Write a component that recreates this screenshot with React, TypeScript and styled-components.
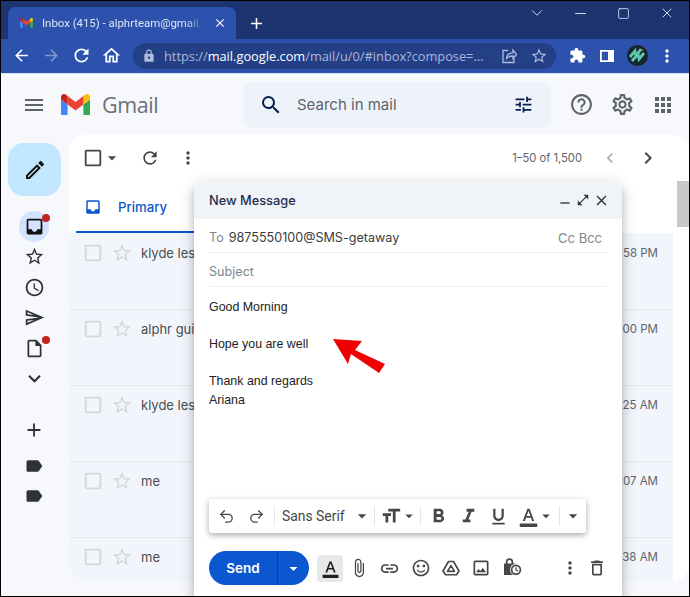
import React from 'react';
import styled, { createGlobalStyle } from 'styled-components';
import { ChevronDown, Minus, Redo2, Square, Undo2, X } from 'lucide-react';
import {
  MdAccessTime, MdAdd, MdApps, MdArrowBack, MdArrowDropDown, MdArrowForward, MdAttachFile,
  MdCheckBoxOutlineBlank, MdChevronLeft, MdChevronRight, MdClose, MdExpandMore, MdExtension,
  MdFormatBold, MdFormatColorText, MdFormatItalic, MdFormatSize, MdFormatUnderlined, MdHelpOutline,
  MdInbox, MdLabel, MdLink, MdLock, MdMenu, MdMoreVert, MdOpenInFull, MdOutlineCreate,
  MdOutlineDelete, MdOutlineHome, MdOutlineInsertDriveFile, MdOutlineInsertPhoto,
  MdOutlineSend, MdOutlineSettings, MdRefresh, MdRemove, MdSearch, MdSentimentSatisfiedAlt,
  MdStarBorder, MdTune,
} from 'react-icons/md';

const GlobalStyle = createGlobalStyle`
  html, body { margin: 0; padding: 0; background: #000; }
  * { box-sizing: border-box; }
`;

const Screen = styled.div`
  position: relative;
  width: 690px;
  height: 597px;
  border: 1px solid #000;
  overflow: hidden;
  display: flex;
  flex-direction: column;
  background: #f6f8fc;
  font-family: Roboto, 'Liberation Sans', sans-serif;
`;

/* browser chrome */
const TabStrip = styled.div`
  height: 38px;
  flex: none;
  background: #1d3471;
  display: flex;
  align-items: flex-end;
  padding-left: 7px;
  color: #fff;
`;

const Tab = styled.div`
  width: 228px;
  height: 32px;
  background: #2c52ad;
  border-radius: 8px 8px 0 0;
  display: flex;
  align-items: center;
  padding: 0 9px 0 12px;
  gap: 9px;
`;

const TabTitle = styled.span`
  flex: 1;
  min-width: 0;
  font-family: Roboto, 'Liberation Sans', sans-serif;
  font-size: 11.4px;
  color: #dfe6f5;
  white-space: nowrap;
  overflow: hidden;
  mask-image: linear-gradient(to right, #000 88%, transparent);
`;

const NewTab = styled.div`
  width: 40px;
  height: 32px;
  display: flex;
  align-items: center;
  justify-content: center;
`;

const WindowControls = styled.div`
  margin-left: auto;
  align-self: flex-start;
  height: 24px;
  display: flex;
  align-items: center;
  color: #dfe6f5;
`;

const ControlSlot = styled.div`
  width: 43.5px;
  display: flex;
  justify-content: center;
`;

const BrowserBar = styled.div`
  height: 35px;
  flex: none;
  background: #2c52ad;
  border-bottom: 1px solid #d8e0ef;
  display: flex;
  align-items: center;
  color: #fff;
  padding-bottom: 1px;
`;

const NavButton = styled.div<{ $w?: number; $dim?: boolean }>`
  width: ${({ $w }) => $w ?? 30}px;
  flex: none;
  display: flex;
  align-items: center;
  justify-content: center;
  color: ${({ $dim }) => ($dim ? '#8298cf' : '#fff')};
`;

const NavGroup = styled.div`
  width: 132px;
  flex: none;
  display: flex;
  padding-left: 5px;
`;

const Omnibox = styled.div`
  width: 423px;
  height: 26px;
  flex: none;
  border-radius: 13px;
  background: #233f86;
  display: flex;
  align-items: center;
  padding: 0 8px 0 9px;
  color: #aebce0;
`;

const Url = styled.span`
  margin-left: 8px;
  font-family: 'Open Sans', 'Liberation Sans', sans-serif;
  font-size: 12.8px;
  color: #aab8dc;
  white-space: nowrap;
  flex: 1;

  b {
    font-weight: 400;
    color: #fff;
  }
`;

const OmniActions = styled.div`
  display: flex;
  align-items: center;
  gap: 12px;
`;

const BrowserActions = styled.div`
  display: flex;
  align-items: center;
  margin-left: 6px;
`;

/* gmail header */
const Header = styled.header`
  height: 61px;
  flex: none;
  display: flex;
  align-items: center;
  color: #5f6368;
  background: #f6f8fc;
`;

const MenuSlot = styled.div`
  width: 60px;
  padding-left: 21px;
  display: flex;
`;

const Brand = styled.div`
  width: 183px;
  display: flex;
  align-items: center;
  gap: 12px;
  font-family: 'Open Sans', Roboto, sans-serif;
  font-size: 21.5px;
  color: #6b6f73;
  letter-spacing: -0.4px;
`;

const SearchBox = styled.div`
  width: 307px;
  height: 46px;
  border-radius: 8px;
  background: #eef3fb;
  display: flex;
  align-items: center;
  padding: 0 17px 0 15px;
  color: #041e49;
`;

const SearchText = styled.span`
  flex: 1;
  margin-left: 14px;
  font-family: Inter, Roboto, sans-serif;
  font-size: 15px;
  color: #5f6368;
`;

const HeaderActions = styled.div`
  display: flex;
  align-items: center;
  margin-left: 18px;
  gap: 16px;
  color: #5f6368;
`;

/* page body */
const Body = styled.div`
  flex: 1;
  min-height: 0;
  display: flex;
  align-items: flex-start;
`;

const Rail = styled.nav`
  width: 68px;
  flex: none;
  display: flex;
  flex-direction: column;
  align-items: center;
  padding-top: 8px;
  color: #303336;
`;

const ComposeFab = styled.div`
  width: 53px;
  height: 53px;
  border-radius: 16px;
  background: #c2e7ff;
  display: flex;
  align-items: center;
  justify-content: center;
  margin: 0 1px 15px 0;
  color: #111;
`;

const RailItem = styled.div<{ $active?: boolean; $gap?: number }>`
  position: relative;
  width: 30px;
  height: 30.5px;
  margin: ${({ $gap }) => $gap ?? 0}px 2px 0 0;
  display: flex;
  align-items: center;
  justify-content: center;
  border-radius: 50%;
  background: ${({ $active }) => ($active ? '#d3e3fd' : 'transparent')};
  color: ${({ $active }) => ($active ? '#111' : 'inherit')};
`;

const Dot = styled.span`
  position: absolute;
  top: 3px;
  right: -1px;
  width: 8px;
  height: 8px;
  border-radius: 50%;
  background: #c5221f;
`;

const Panel = styled.main`
  position: relative;
  flex: 1;
  height: 446px;
  background: #fff;
  border-radius: 16px;
  overflow: hidden;
`;

const ListToolbar = styled.div`
  height: 46px;
  display: flex;
  align-items: center;
  padding: 0 22px 0 14px;
  color: #444746;
`;

const ToolSlot = styled.div<{ $w: number; $dim?: boolean }>`
  width: ${({ $w }) => $w}px;
  flex: none;
  display: flex;
  align-items: center;
  justify-content: center;
  color: ${({ $dim }) => ($dim ? '#a9adb2' : 'inherit')};

  svg {
    flex: none;
  }
`;

const PageCount = styled.span`
  margin-left: auto;
  margin-right: 9px;
  font-family: Inter, Roboto, sans-serif;
  font-size: 11.2px;
  color: #5f6368;
`;

const TabsRow = styled.div`
  height: 52px;
  padding-left: 7px;
  display: flex;
`;

const PrimaryTab = styled.div`
  width: 300px;
  height: 52px;
  border-bottom: 2px solid #0b57d0;
  display: flex;
  align-items: center;
  gap: 16px;
  padding: 2px 0 0 8px;
  color: #0b57d0;
  font-family: Inter, Roboto, sans-serif;
  font-size: 13.2px;
  font-weight: 500;
`;

const Rows = styled.div`
  width: 604px;
  height: 348px;
  background: #f2f6fc;
  border-radius: 0 0 0 16px;
`;

const Row = styled.div<{ $short?: boolean }>`
  height: ${({ $short }) => ($short ? 44 : 76)}px;
  border-top: 1px solid #e3e6ea;
  display: flex;
  align-items: flex-start;
  padding: 8px 15px 0 13px;
  color: #d4d7da;
  gap: 7px;

  &:first-child {
    border-top: none;
    padding-top: 9px;
  }
`;

const Sender = styled.span`
  margin-left: 1px;
  width: 120px;
  line-height: 22px;
  font-family: Inter, Roboto, sans-serif;
  font-size: 13px;
  color: #4a4d50;
  white-space: nowrap;
`;

const Time = styled.span`
  margin-left: auto;
  line-height: 22px;
  font-family: Inter, Roboto, sans-serif;
  font-size: 11.5px;
  color: #5f6368;
`;

const ScrollThumb = styled.div`
  position: absolute;
  right: 0;
  top: 46px;
  width: 12px;
  height: 46px;
  background: #c8c8c8;
`;

/* compose window */
const Compose = styled.section`
  position: absolute;
  left: 193px;
  top: 180px;
  bottom: -10px;
  width: 428px;
  background: #fff;
  border-radius: 8px 8px 0 0;
  box-shadow: 0 8px 10px 1px rgba(0, 0, 0, 0.14), 0 3px 14px 2px rgba(0, 0, 0, 0.12), 0 5px 5px -3px rgba(0, 0, 0, 0.2);
  display: flex;
  flex-direction: column;
`;

const ComposeHead = styled.div`
  height: 38px;
  flex: none;
  background: #f0f4f9;
  border-radius: 8px 8px 0 0;
  display: flex;
  align-items: center;
  padding: 0 12px 0 15px;
  font-family: Inter, Roboto, sans-serif;
  font-size: 12.8px;
  font-weight: 500;
  color: #1f2f4d;
`;

const HeadControls = styled.div`
  margin-left: auto;
  display: flex;
  align-items: center;
  gap: 3px;
  color: #2f3437;
`;

const Field = styled.div<{ $h: number }>`
  height: ${({ $h }) => $h}px;
  flex: none;
  margin: 0 16px 0 15px;
  padding-top: 4px;
  border-bottom: 1px solid #eceef0;
  display: flex;
  align-items: center;
  gap: 5px;
  font-family: Inter, Roboto, sans-serif;
  font-size: 12.6px;
  color: #3a3d40;
`;

const Muted = styled.span`
  color: #80868b;
`;

const CcBcc = styled.span`
  margin-left: auto;
  margin-right: 4px;
  font-size: 13px;
  color: #80868b;
`;

const Message = styled.div`
  flex: 1;
  min-height: 0;
  padding: 11px 15px 0;
  font-family: 'Liberation Sans', Arial, sans-serif;
  font-size: 12.4px;
  line-height: 18.6px;
  color: #222;
`;

const FormatBar = styled.div`
  width: 377px;
  height: 34px;
  flex: none;
  margin-left: 15px;
  background: #fff;
  border-radius: 3px;
  box-shadow: 0 2px 6px rgba(0, 0, 0, 0.35);
  display: flex;
  align-items: center;
  padding-left: 2px;
  color: #444746;
`;

const Divider = styled.span<{ $before?: number }>`
  width: 1px;
  height: 20px;
  flex: none;
  margin-left: ${({ $before }) => $before ?? 0}px;
  background: #e4e6e8;
`;

const FontName = styled.span`
  width: 75px;
  flex: none;
  padding-left: 7px;
  font-family: Roboto, sans-serif;
  font-size: 13.9px;
  color: #444746;
  white-space: nowrap;
`;

const SendBar = styled.div`
  height: 34px;
  flex: none;
  margin: 18px 12px 21px 15px;
  display: flex;
  align-items: center;
  color: #444746;
`;

const SendButton = styled.div`
  width: 100px;
  height: 34px;
  flex: none;
  border-radius: 17px;
  background: #0b57d0;
  color: #fff;
  display: flex;
  align-items: center;
  font-family: Inter, Roboto, sans-serif;
  font-size: 13.5px;
  font-weight: 600;
`;

const SendLabel = styled.span`
  width: 69px;
  height: 34px;
  display: flex;
  align-items: center;
  justify-content: center;
  border-right: 1px solid #0a3f99;
`;

const CaretPart = styled.span`
  flex: 1;
  display: flex;
  justify-content: center;
`;

const ColorToggle = styled.div`
  width: 26px;
  height: 27px;
  flex: none;
  margin: 0 1px 0 8px;
  border-radius: 3px;
  background: #e8e8e8;
  display: flex;
  align-items: center;
  justify-content: center;
`;

const BarEnd = styled.div`
  margin-left: auto;
  display: flex;
  align-items: center;
`;

const PointerArrow = styled.svg`
  position: absolute;
  left: 330px;
  top: 335px;
  width: 56px;
  height: 40px;
`;

const GmailMark: React.FC<{ w: number }> = ({ w }) => (
  <svg width={w} viewBox="52 42 88 66" style={{ flex: 'none' }}>
    <path fill="#4285f4" d="M58 108h14V74L52 59v43c0 3.32 2.69 6 6 6" />
    <path fill="#34a853" d="M120 108h14c3.32 0 6-2.69 6-6V59l-20 15" />
    <path fill="#fbbc04" d="M120 48v26l20-15v-8c0-7.42-8.47-11.65-14.4-7.2" />
    <path fill="#ea4335" d="M72 74V48l24 18 24-18v26L96 92" />
    <path fill="#c5221f" d="M52 51v8l20 15V48l-5.6-4.2c-5.94-4.45-14.4-.22-14.4 7.2" />
  </svg>
);

const ShareIcon = () => (
  <svg width="18" height="18" viewBox="0 0 18 18" fill="none" stroke="currentColor" strokeWidth="1.3">
    <path d="M8 3.5H3v12h11v-4" />
    <path d="M6.5 11.5c.3-3.6 3-5.6 6.5-5.6V3l3.5 4.4-3.5 4V9c-2.6 0-4.6.7-6.5 2.5z" />
  </svg>
);

const SidePanelIcon = () => (
  <svg width="14" height="14" viewBox="0 0 14 14">
    <path fill="#fff" fillRule="evenodd" d="M0 1h14v12H0zM1.800 2.800v8.400H8V2.800z" />
  </svg>
);

const Avatar = () => (
  <svg width="21" height="21" viewBox="0 0 21 21">
    <circle cx="10.500" cy="10.500" r="10.500" fill="#15262c" />
    <path d="M3 12l5-6 1 5 5-7M5 16l6-7 1 5 5-6" fill="none" stroke="#5fc9b0" strokeWidth="2.800" />
    <circle cx="15" cy="5" r="1" fill="#d0574a" />
  </svg>
);

const DriveIcon = () => (
  <svg width="20" height="20" viewBox="0 0 20 20" fill="none" stroke="currentColor" strokeWidth="1.600" strokeLinejoin="round">
    <path d="M7.500 3.500h5L18 13l-2.500 3.800h-11L2 13z" />
    <path d="M10 7.600L13.500 13.400h-7z" />
  </svg>
);

const LockClockIcon = () => (
  <svg width="20" height="20" viewBox="0 0 20 20">
    <path fill="#444746" d="M2 5.500h1.800V4a3.700 3.700 0 017.400 0v1.500H13V17H2zM5.500 5.500h4V4a2 2 0 00-4 0z" />
    <circle cx="14" cy="11.800" r="6" fill="#fff" />
    <circle cx="14" cy="11.800" r="4.400" fill="none" stroke="#444746" strokeWidth="1.700" />
    <path d="M14 9.200v2.800l1.800 1.200" fill="none" stroke="#444746" strokeWidth="1.200" />
  </svg>
);

const rows = [
  { sender: 'klyde lester', time: '12:58 PM' },
  { sender: 'alphr guides', time: '12:00 PM' },
  { sender: 'klyde lester', time: '11:25 AM' },
  { sender: 'me', time: '11:07 AM' },
  { sender: 'me', time: '10:38 AM', short: true },
];

const App: React.FC = () => (
  <Screen>
    <GlobalStyle />
    <TabStrip>
      <Tab>
        <GmailMark w={13} />
        <TabTitle>Inbox (415) - alphrteam@gmail.com</TabTitle>
        <MdClose size={14} />
      </Tab>
      <NewTab>
        <MdAdd size={19} />
      </NewTab>
      <WindowControls>
        <ControlSlot><ChevronDown size={18} strokeWidth={1.2} /></ControlSlot>
        <ControlSlot><Minus size={17} strokeWidth={1.3} /></ControlSlot>
        <ControlSlot><Square size={13} strokeWidth={1.5} /></ControlSlot>
        <ControlSlot><X size={16} strokeWidth={1.4} /></ControlSlot>
      </WindowControls>
    </TabStrip>

    <BrowserBar>
      <NavGroup>
        <NavButton><MdArrowBack size={19} /></NavButton>
        <NavButton $dim><MdArrowForward size={19} /></NavButton>
        <NavButton><MdRefresh size={21} /></NavButton>
        <NavButton><MdOutlineHome size={21} /></NavButton>
      </NavGroup>
      <Omnibox>
        <MdLock size={14} />
        <Url>https://<b>mail.google.com</b>/mail/u/0/#inbox?compose=...</Url>
        <OmniActions>
          <ShareIcon />
          <MdStarBorder size={18} />
        </OmniActions>
      </Omnibox>
      <BrowserActions>
        <NavButton><MdExtension size={17} /></NavButton>
        <NavButton><SidePanelIcon /></NavButton>
        <NavButton><Avatar /></NavButton>
        <NavButton><MdMoreVert size={20} /></NavButton>
      </BrowserActions>
    </BrowserBar>

    <Header>
      <MenuSlot><MdMenu size={24} /></MenuSlot>
      <Brand>
        <GmailMark w={29} />
        Gmail
      </Brand>
      <SearchBox>
        <MdSearch size={24} />
        <SearchText>Search in mail</SearchText>
        <MdTune size={21} />
      </SearchBox>
      <HeaderActions>
        <MdHelpOutline size={25} />
        <MdOutlineSettings size={25} />
        <MdApps size={24} />
      </HeaderActions>
    </Header>

    <Body>
      <Rail>
        <ComposeFab><MdOutlineCreate size={24} /></ComposeFab>
        <RailItem $active>
          <MdInbox size={21} />
          <Dot />
        </RailItem>
        <RailItem><MdStarBorder size={21} /></RailItem>
        <RailItem><MdAccessTime size={21} /></RailItem>
        <RailItem><MdOutlineSend size={21} /></RailItem>
        <RailItem>
          <MdOutlineInsertDriveFile size={21} />
          <Dot />
        </RailItem>
        <RailItem><MdExpandMore size={25} /></RailItem>
        <RailItem $gap={21}><MdAdd size={22} /></RailItem>
        <RailItem $gap={5}><MdLabel size={20} /></RailItem>
        <RailItem><MdLabel size={20} /></RailItem>
      </Rail>

      <Panel>
        <ListToolbar>
          <ToolSlot $w={20}><MdCheckBoxOutlineBlank size={22} /></ToolSlot>
          <ToolSlot $w={18}><MdArrowDropDown size={20} /></ToolSlot>
          <ToolSlot $w={58}><MdRefresh size={20} /></ToolSlot>
          <ToolSlot $w={18}><MdMoreVert size={20} /></ToolSlot>
          <PageCount>1–50 of 1,500</PageCount>
          <ToolSlot $w={38} $dim><MdChevronLeft size={20} /></ToolSlot>
          <ToolSlot $w={38}><MdChevronRight size={24} /></ToolSlot>
        </ListToolbar>
        <TabsRow>
          <PrimaryTab>
            <MdInbox size={18} />
            Primary
          </PrimaryTab>
        </TabsRow>
        <Rows>
          {rows.map((row) => (
            <Row key={row.sender + row.time} $short={row.short}>
              <MdCheckBoxOutlineBlank size={22} />
              <MdStarBorder size={22} />
              <Sender>{row.sender}</Sender>
              <Time>{row.time}</Time>
            </Row>
          ))}
        </Rows>
        <ScrollThumb />
      </Panel>
    </Body>

    <Compose>
      <ComposeHead>
        New Message
        <HeadControls>
          <MdRemove size={16} style={{ marginTop: 5 }} />
          <MdOpenInFull size={14} />
          <MdClose size={17} />
        </HeadControls>
      </ComposeHead>
      <Field $h={34}>
        <Muted>To</Muted>
        9875550100@SMS-getaway
        <CcBcc>Cc Bcc</CcBcc>
      </Field>
      <Field $h={34}><Muted>Subject</Muted></Field>
      <Message>
        Good Morning
        <br />
        <br />
        Hope you are well
        <br />
        <br />
        Thank and regards
        <br />
        Ariana
      </Message>
      <FormatBar>
        <ToolSlot $w={30}><Undo2 size={17} strokeWidth={1.9} /></ToolSlot>
        <ToolSlot $w={30}><Redo2 size={17} strokeWidth={1.9} /></ToolSlot>
        <Divider $before={3} />
        <FontName>Sans Serif</FontName>
        <ToolSlot $w={24}><MdArrowDropDown size={20} /></ToolSlot>
        <Divider />
        <ToolSlot $w={32}><MdFormatSize size={22} /></ToolSlot>
        <ToolSlot $w={4}><MdArrowDropDown size={18} /></ToolSlot>
        <Divider $before={9} />
        <ToolSlot $w={2} />
        <ToolSlot $w={30}><MdFormatBold size={23} /></ToolSlot>
        <ToolSlot $w={30}><MdFormatItalic size={23} /></ToolSlot>
        <ToolSlot $w={30}><MdFormatUnderlined size={21} /></ToolSlot>
        <ToolSlot $w={30}><MdFormatColorText size={21} /></ToolSlot>
        <ToolSlot $w={6}><MdArrowDropDown size={18} /></ToolSlot>
        <Divider $before={10} />
        <ToolSlot $w={26}><MdArrowDropDown size={20} /></ToolSlot>
      </FormatBar>
      <SendBar>
        <SendButton>
          <SendLabel>Send</SendLabel>
          <CaretPart><MdArrowDropDown size={19} /></CaretPart>
        </SendButton>
        <ColorToggle><MdFormatColorText size={19} color="#222" /></ColorToggle>
        <ToolSlot $w={30}><MdAttachFile size={20} /></ToolSlot>
        <ToolSlot $w={31}><MdLink size={21} /></ToolSlot>
        <ToolSlot $w={31}><MdSentimentSatisfiedAlt size={20} /></ToolSlot>
        <ToolSlot $w={30}><DriveIcon /></ToolSlot>
        <ToolSlot $w={30}><MdOutlineInsertPhoto size={20} /></ToolSlot>
        <ToolSlot $w={31}><LockClockIcon /></ToolSlot>
        <BarEnd>
          <ToolSlot $w={27}><MdMoreVert size={20} /></ToolSlot>
          <ToolSlot $w={27}><MdOutlineDelete size={20} /></ToolSlot>
        </BarEnd>
      </SendBar>
    </Compose>

    <PointerArrow viewBox="330 335 56 40">
      <polygon fill="#f00000" points="332,338 361,340 354,349 384,363 378,372 350,353 347,363" />
    </PointerArrow>
  </Screen>
);

export default App;
